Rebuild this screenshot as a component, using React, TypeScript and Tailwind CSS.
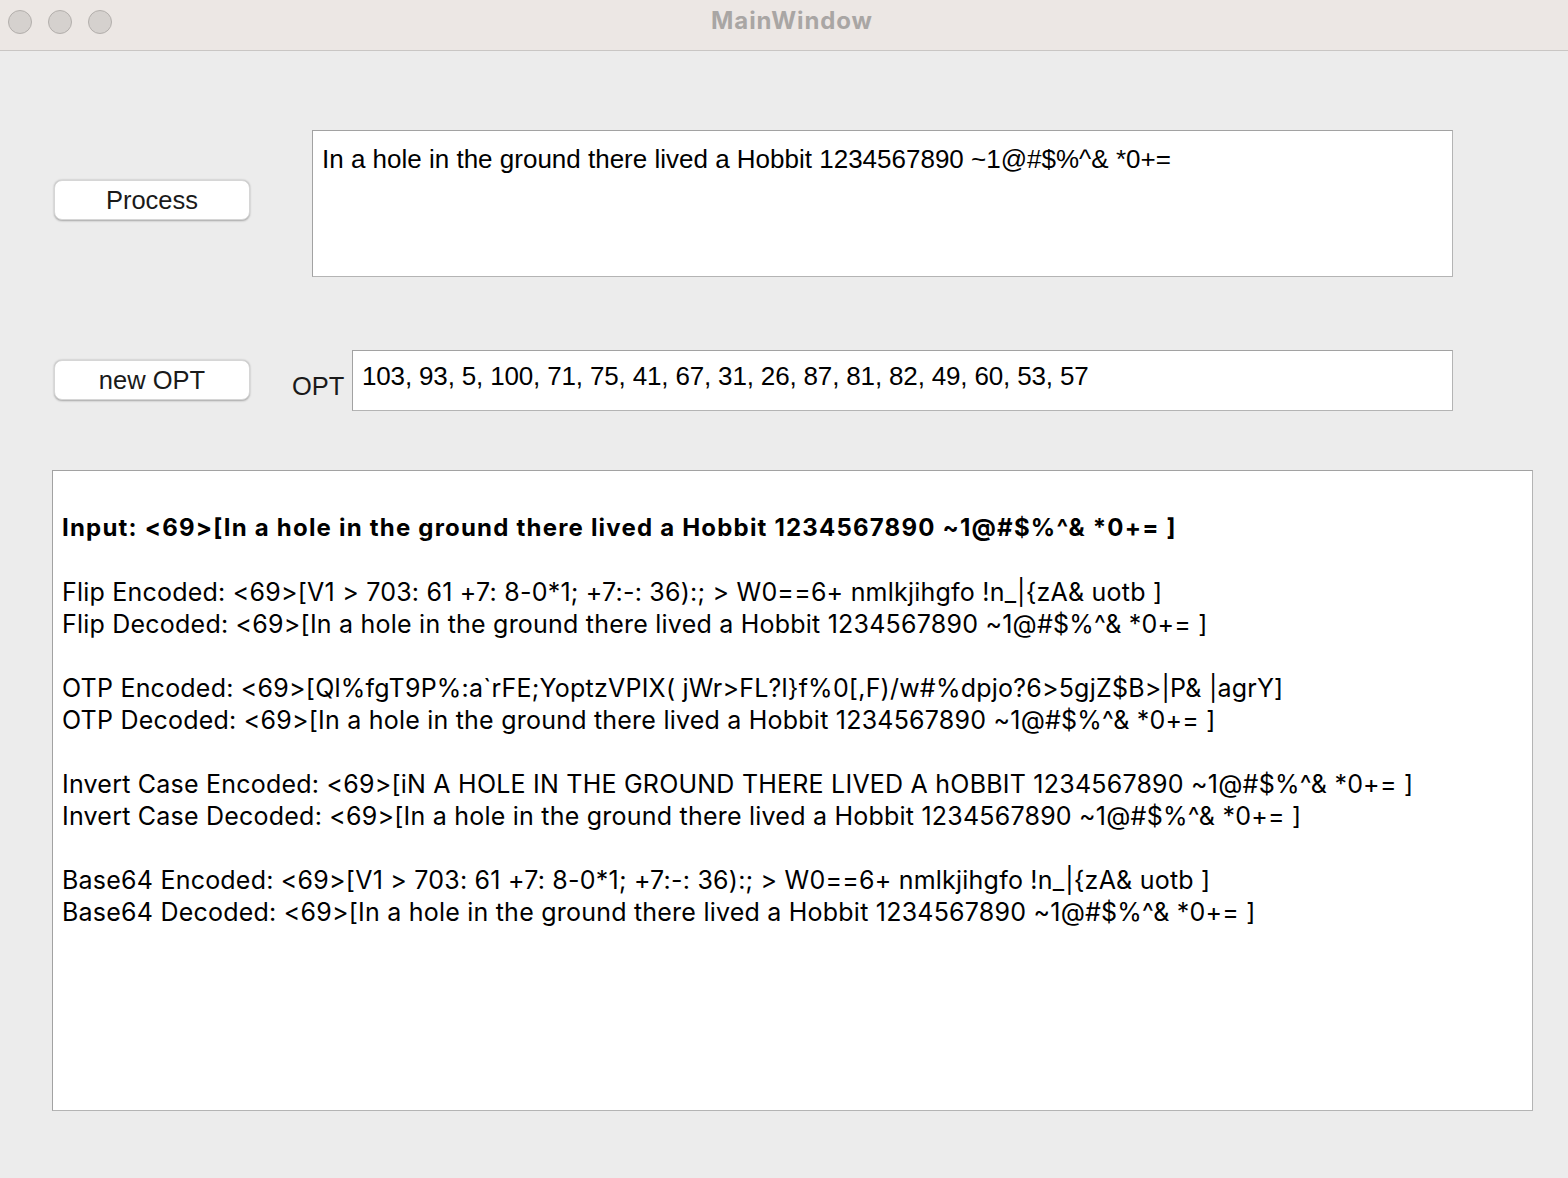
import React from "react";

const sf = { fontFamily: 'Inter, "Noto Sans", sans-serif' };
const hv = { fontFamily: '"Liberation Sans", Arial, sans-serif' };

function MacButton({ label }: { label: string }) {
  return (
    <div
      className="w-[196px] h-[40px] rounded-[8px] bg-white flex items-center justify-center text-[25.5px] text-[#1a1a1a] shadow-[0_0.5px_2px_rgba(0,0,0,0.3)] border border-[#d6d6d6]"
      style={hv}
    >
      {label}
    </div>
  );
}

export default function App() {
  const lines: { t: string; bold?: boolean }[] = [
    { t: "" },
    { t: "Input: <69>[In a hole in the ground there lived a Hobbit 1234567890 ~1@#$%^& *0+= ]", bold: true },
    { t: "" },
    { t: "Flip Encoded: <69>[V1 > 703: 61 +7: 8-0*1; +7:-: 36):; > W0==6+ nmlkjihgfo !n_|{zA& uotb ]" },
    { t: "Flip Decoded: <69>[In a hole in the ground there lived a Hobbit 1234567890 ~1@#$%^& *0+= ]" },
    { t: "" },
    { t: "OTP Encoded: <69>[Ql%fgT9P%:a`rFE;YoptzVPIX( jWr>FL?l}f%0[,F)/w#%dpjo?6>5gjZ$B>|P& |agrY]" },
    { t: "OTP Decoded: <69>[In a hole in the ground there lived a Hobbit 1234567890 ~1@#$%^& *0+= ]" },
    { t: "" },
    { t: "Invert Case Encoded: <69>[iN A HOLE IN THE GROUND THERE LIVED A hOBBIT 1234567890 ~1@#$%^& *0+= ]" },
    { t: "Invert Case Decoded: <69>[In a hole in the ground there lived a Hobbit 1234567890 ~1@#$%^& *0+= ]" },
    { t: "" },
    { t: "Base64 Encoded: <69>[V1 > 703: 61 +7: 8-0*1; +7:-: 36):; > W0==6+ nmlkjihgfo !n_|{zA& uotb ]" },
    { t: "Base64 Decoded: <69>[In a hole in the ground there lived a Hobbit 1234567890 ~1@#$%^& *0+= ]" },
  ];

  return (
    <div className="w-[1568px] h-[1178px] bg-[#ececec] overflow-hidden flex flex-col">
      {/* Title bar */}
      <div className="h-[51px] bg-[#ece7e4] border-b border-[#c9c6c4] flex items-center relative shrink-0">
        <div className="flex items-center gap-[16px] pl-[8px] pb-[6px]">
          <div className="w-[24px] h-[24px] rounded-full bg-[#d5d1ce] border border-[#b3afac]" />
          <div className="w-[24px] h-[24px] rounded-full bg-[#d5d1ce] border border-[#b3afac]" />
          <div className="w-[24px] h-[24px] rounded-full bg-[#d5d1ce] border border-[#b3afac]" />
        </div>
        <div
          className="absolute left-0 right-0 top-0 h-[42px] pl-[16px] flex items-center justify-center text-[24px] font-bold tracking-[0.9px] text-[#a9a6a4]"
          style={sf}
        >
          MainWindow
        </div>
      </div>

      {/* Row 1 */}
      <div className="flex items-start mt-[79px]">
        <div className="ml-[54px] mt-[50px]">
          <MacButton label="Process" />
        </div>
        <div
          className="ml-[62px] w-[1141px] h-[147px] bg-white border border-[#b4b4b4] border-t-[#a2a2a2] border-l-[#a2a2a2] pl-[9px] pt-[14px] text-[26px] leading-[28px] text-black whitespace-pre"
          style={hv}
        >
          {"In a hole in the ground there lived a Hobbit 1234567890 ~1@#$%^& *0+="}
        </div>
      </div>

      {/* Row 2 */}
      <div className="flex items-start mt-[73px]">
        <div className="ml-[54px] mt-[10px]">
          <MacButton label="new OPT" />
        </div>
        <div
          className="ml-[42px] w-[60px] mt-[22px] text-[25.5px] leading-[28px] text-[#1a1a1a]"
          style={hv}
        >
          OPT
        </div>
        <div
          className="w-[1101px] h-[61px] bg-white border border-[#b4b4b4] border-t-[#a2a2a2] border-l-[#a2a2a2] pl-[9px] pt-[11px] text-[26px] leading-[28px] text-black whitespace-pre tracking-[-0.16px]"
          style={hv}
        >
          {"103, 93, 5, 100, 71, 75, 41, 67, 31, 26, 87, 81, 82, 49, 60, 53, 57"}
        </div>
      </div>

      {/* Output */}
      <div
        className="ml-[52px] mt-[59px] w-[1481px] h-[641px] bg-white border border-[#b4b4b4] border-t-[#a2a2a2] border-l-[#a2a2a2] pl-[9px] pt-[9px] text-[25px] leading-[32px] tracking-[0.22px] text-black"
        style={sf}
      >
        {lines.map((l, i) => (
          <div
            key={i}
            className={`whitespace-pre h-[32px] ${l.bold ? "font-bold text-[24px] tracking-[1.2px]" : ""}`}
          >
            {l.t}
          </div>
        ))}
      </div>
    </div>
  );
}
